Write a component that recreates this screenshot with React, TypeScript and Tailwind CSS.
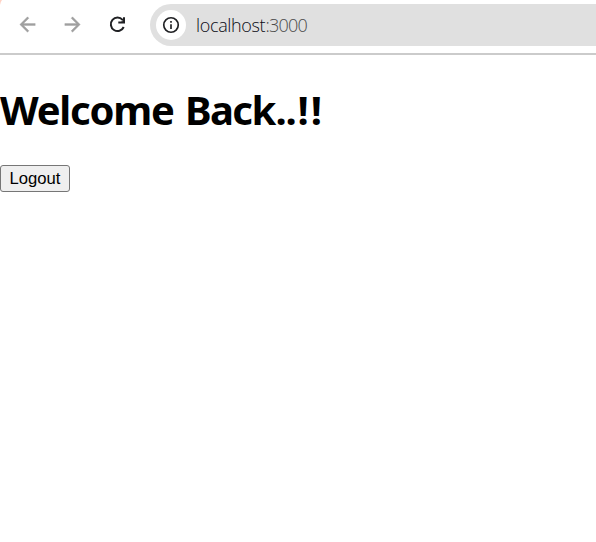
import React from "react";

const icon = "h-6 w-6 shrink-0";

export default function App() {
  return (
    <div className="relative h-[542px] w-full overflow-hidden bg-white text-black">
      <svg className="absolute left-0 top-0 h-[5px] w-[2px]" viewBox="0 0 2 5" fill="#ffd2c4">
        <path d="M0 0h2Q.4 2 0 5z" />
      </svg>
      <header className="flex h-[55px] items-start border-b-2 border-[#cbcbcb] bg-white pt-[4px]">
        <nav className="flex h-[42px] w-[150px] shrink-0 items-center gap-[21px] pl-[15.5px]">
          <svg className={icon} viewBox="0 0 24 24" fill="#a0a0a0" stroke="#a0a0a0" strokeWidth=".4">
            <path d="M20 11H7.83l5.59-5.59L12 4l-8 8 8 8 1.41-1.41L7.83 13H20v-2z" transform="translate(0 0) scale(.96)" />
          </svg>
          <svg className={icon} viewBox="0 0 24 24" fill="#a0a0a0" stroke="#a0a0a0" strokeWidth=".4">
            <path d="M12 4l-1.41 1.41L16.17 11H4v2h12.17l-5.58 5.59L12 20l8-8z" transform="translate(0 0) scale(.96)" />
          </svg>
          <svg className={icon} viewBox="0 0 24 24" fill="none" stroke="#202124" strokeWidth="2">
            <path d="M16.6 6.9A6.7 6.7 0 1 0 17.7 14M18 4.2v5.3h-5.7" />
            <path d="M15.1 8.7l2.9-2.9v2.9z" fill="#202124" stroke="none" />
          </svg>
        </nav>
        <div className="flex h-[42px] flex-1 items-center rounded-l-full bg-[#e0e0e0] pl-[6px]">
          <span className="flex h-[30px] w-[30px] items-center justify-center rounded-full bg-white">
            <svg className="h-5 w-5" viewBox="0 0 24 24" fill="none" stroke="#202124">
              <circle cx="12" cy="12" r="8.7" strokeWidth="2" />
              <path d="M12 7.2v2.1M12 11v5.8" strokeWidth="2" />
            </svg>
          </span>
          <span className="ml-[10px] flex font-['Open_Sans',sans-serif] text-[18px] font-light leading-6 text-[#0a0a14]">
            <span className="w-[69.5px] tracking-[-0.35px]">localhost</span>
            <span className="tracking-[-0.8px] text-[#4a4a4a]">:3000</span>
          </span>
        </div>
      </header>
      <main>
        <h1 className="mt-[27px] flex h-[56px] whitespace-nowrap font-['Noto_Sans',sans-serif] text-[40px] font-bold leading-[56px]">
          <span className="w-[185px] tracking-[-1.2px]">Welcome</span>
          <span className="w-[90.5px] tracking-[-1.6px]">Back</span>
          <span className="w-[22px] tracking-[-1.3px]">..</span>
          <span className="tracking-[2px]">!!</span>
        </h1>
        <button className="mt-[27px] block h-[27px] w-[70px] rounded-[3px] border border-[#767676] bg-[#efefef] font-['Liberation_Sans',sans-serif] text-[16.67px] leading-[25px]">Logout</button>
      </main>
    </div>
  );
}
